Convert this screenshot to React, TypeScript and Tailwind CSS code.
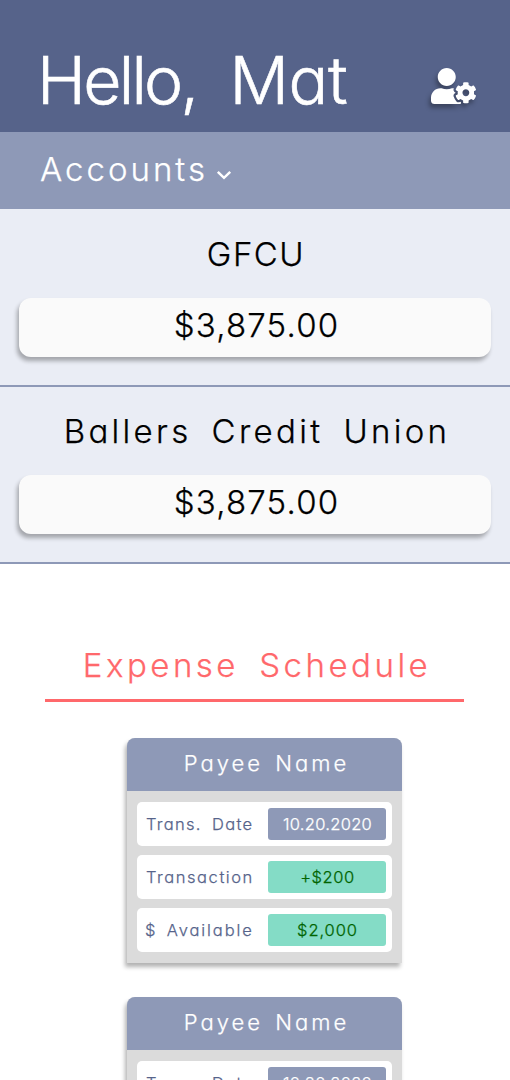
import React from 'react';
import { FaUserCog } from 'react-icons/fa';

const accounts = [
  { name: 'GFCU', balance: '$3,875.00', style: 'tracking-[1.5px] pl-0.5' },
  { name: 'Ballers Credit Union', balance: '$3,875.00', style: 'tracking-[3.3px] [word-spacing:7.5px] pl-1' },
];

const payees = [1, 2];

function Account({ name, balance, style }: { name: string; balance: string; style: string }) {
  return (
    <section className="h-[177px] border-b-2 border-[#8e99b7] px-[19px] pt-5 text-center text-[33px] leading-[48px]">
      <h2 className={style}>{name}</h2>
      <div className="mt-5 h-[59px] rounded-xl bg-[#fafafa] pt-[3px] pl-[3px] tracking-[1.2px] shadow-[-2px_4px_4px_rgba(0,0,0,0.3)]">
        {balance}
      </div>
    </section>
  );
}

function Row({ label, labelStyle, value, valueStyle }: { label: string; labelStyle: string; value: string; valueStyle: string }) {
  return (
    <div className="flex h-11 items-center justify-between rounded-[5px] bg-white pr-1.5 pl-[9px] text-[16.5px] leading-none whitespace-nowrap">
      <span className={`text-[#56638a] ${labelStyle}`}>{label}</span>
      <span className={`flex h-8 w-[118px] items-center justify-center rounded-[3px] pt-px pl-px ${valueStyle}`}>{value}</span>
    </div>
  );
}

function PayeeCard() {
  return (
    <article className="h-[225px] w-[275px] shrink-0 rounded-t-lg bg-[#dbdbdb] shadow-[-2px_4px_4px_rgba(0,0,0,0.3)]">
      <h3 className="h-[53px] rounded-t-lg bg-[#8e99b7] pl-1 text-center text-[22px] leading-[51px] tracking-[3px] text-white [word-spacing:3px]">
        Payee Name
      </h3>
      <div className="flex flex-col gap-[9px] px-2.5 pt-[11px]">
        <Row label="Trans. Date" labelStyle="tracking-[1.3px] [word-spacing:4.3px]" value="10.20.2020" valueStyle="bg-[#8e99b7] text-white tracking-[0.3px]" />
        <Row label="Transaction" labelStyle="tracking-[1.55px]" value="+$200" valueStyle="bg-[#84dcc6] text-[#006400] tracking-[0.6px]" />
        <Row label="$ Available" labelStyle="tracking-[1.9px] [word-spacing:3px] -ml-px" value="$2,000" valueStyle="bg-[#84dcc6] text-[#006400] tracking-[0.9px]" />
      </div>
    </article>
  );
}

export default function App() {
  return (
    <div className="h-[1080px] w-full overflow-hidden bg-white font-['Inter',sans-serif] font-light text-black [font-feature-settings:'cv11'] [-webkit-text-stroke:0.25px_currentColor]">
      <header className="flex h-[132px] items-start justify-between bg-[#56638a] pr-[34px] pl-[37px] text-white">
        <h1 className="flex gap-[33px] pt-[40px] text-[66px] leading-[80px] [-webkit-text-stroke:0.6px_currentColor]">
          <span className="tracking-[-2.7px]">Hello,</span>
          <span className="tracking-[-0.3px]">Mat</span>
        </h1>
        <FaUserCog className="mt-[68px] h-9 w-[45px] [stroke-width:0] drop-shadow-[-2px_4px_2px_rgba(0,0,0,0.3)]" />
      </header>
      <nav className="flex h-[77px] items-start bg-[#8e99b7] pl-10 text-white">
        <span className="w-[170px] pt-[13px] text-[33px] leading-[48px] tracking-[3px] whitespace-nowrap">Accounts</span>
        <svg className="mt-[38px] ml-1.5 h-2.5 w-4" viewBox="0 0 16 10" fill="none" stroke="currentColor" strokeWidth="2.5">
          <path d="M1.8 1.8 8 7.8 14.2 1.8" />
        </svg>
      </nav>
      <div className="bg-[#eaedf5] pt-px">
        {accounts.map((a) => (
          <Account key={a.name} {...a} />
        ))}
      </div>
      <main className="flex flex-col items-center">
        <h2 className="mt-[76px] mr-px h-[62px] w-[419px] border-b-[3px] border-[#ff686b] pl-[5px] text-center text-[33px] leading-[50px] tracking-[3.5px] text-[#ff686b] [word-spacing:7.5px]">
          Expense Schedule
        </h2>
        <div className="mt-9 ml-[19px] flex flex-col gap-[34px]">
          {payees.map((p) => (
            <PayeeCard key={p} />
          ))}
        </div>
      </main>
    </div>
  );
}
